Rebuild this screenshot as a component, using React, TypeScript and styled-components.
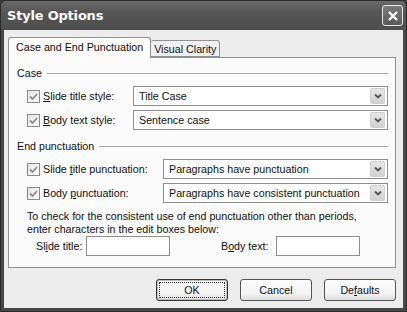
import React from 'react';
import styled, { createGlobalStyle } from 'styled-components';

const GlobalStyle = createGlobalStyle`
  html, body { margin: 0; padding: 0; background: #3a3a3a; }
  body { font-family: "Liberation Sans", Arial, sans-serif; font-size: 10.7px; color: #111; }
`;

const Window = styled.div`
  width: 407px; height: 312px; box-sizing: border-box;
  display: flex; flex-direction: column;
  background: #474747;
  border: 1px solid #2c2c2c;
  border-radius: 6px 6px 0 0;
  overflow: hidden;
`;

const TitleBar = styled.div`
  height: 29px; flex-shrink: 0;
  display: flex; align-items: center; justify-content: space-between;
  padding: 0 3px 0 6px;
  background: linear-gradient(#6a6a6a, #555 40%, #4e4e4e);
`;

const TitleText = styled.span`
  color: #fff; font-weight: bold; font-size: 13px;
  font-family: "DejaVu Sans", "Liberation Sans", sans-serif;
  letter-spacing: -0.2px;
`;

const CloseBtn = styled.div`
  box-sizing: border-box;
  width: 21px; height: 21px;
  border: 1px solid #e8e8e8; border-radius: 3px;
  background: linear-gradient(#7a7a7a, #5a5a5a);
  display: flex; align-items: center; justify-content: center;
`;

const Frame = styled.div`
  flex: 1;
  margin: 0 3px 3px;
  background: #ececec;
  padding: 7px 4px 0;
  display: flex; flex-direction: column;
`;

const TabStrip = styled.div`
  display: flex; align-items: flex-end; height: 20px;
  position: relative; z-index: 1;
`;

const Tab = styled.div<{ $active?: boolean }>`
  box-sizing: border-box;
  height: ${p => (p.$active ? '21px' : '17px')};
  margin-bottom: ${p => (p.$active ? '-1px' : '0')};
  padding: ${p => (p.$active ? '3px 7px 0' : '2px 3px 0')};
  border: 1px solid #919191;
  border-bottom: ${p => (p.$active ? 'none' : '1px solid #919191')};
  border-left: ${p => (p.$active ? '1px solid #919191' : 'none')};
  border-radius: 3px 3px 0 0;
  background: ${p => (p.$active ? '#fbfbfb' : '#f0f0f0')};
  white-space: nowrap;
`;

const Panel = styled.div`
  box-sizing: border-box;
  width: 388px; height: 211px;
  border: 1px solid #919191;
  background: #fbfbfb;
  padding: 2px 7px 0 8px;
`;

const GroupHead = styled.div<{ $gap?: number }>`
  display: flex; align-items: center; gap: 5px;
  height: 26px;
  margin-top: ${p => p.$gap ?? 0}px;
  &::after { content: ''; flex: 1; border-top: 1px solid #a8a8a8; margin-top: 1px; }
`;

const Rows = styled.div`
  display: flex; flex-direction: column; gap: 4px;
  padding-left: 10px;
`;

const Row = styled.div<{ $labelW: number }>`
  display: grid;
  grid-template-columns: ${p => p.$labelW}px 1fr;
  align-items: center;
  height: 20px;
`;

const CheckLabel = styled.label`
  display: flex; align-items: center; gap: 3px;
  white-space: nowrap;
`;

const Box = styled.span`
  box-sizing: border-box;
  width: 13px; height: 13px;
  border: 1px solid #8a8a8a;
  background: linear-gradient(135deg, #e4e4e4, #fdfdfd);
  display: flex; align-items: center; justify-content: center;
`;

const Select = styled.div`
  box-sizing: border-box; height: 20px;
  border: 1px solid #8e8e8e; background: #fff;
  display: flex; align-items: center; justify-content: space-between;
  padding: 0 2px 0 5px;
`;

const Arrow = styled.span`
  box-sizing: border-box;
  width: 15px; height: 16px;
  border: 1px solid #cfcfcf; border-radius: 2px;
  background: linear-gradient(#e6e6e6, #d2d2d2);
  display: flex; align-items: center; justify-content: center;
`;

const Note = styled.div`
  margin-top: 7px; padding-left: 10px; line-height: 13px;
`;

const EditRow = styled.div`
  display: flex; align-items: center;
  padding-left: 19px; height: 20px;
`;

const EditLabel = styled.span<{ $w: number }>`
  width: ${p => p.$w}px;
`;

const Edit = styled.div`
  box-sizing: border-box;
  width: 84px; height: 20px;
  border: 1px solid #8e8e8e; background: #fff;
`;

const Spacer = styled.div<{ $w: number }>`
  width: ${p => p.$w}px;
`;

const Buttons = styled.div`
  display: flex; justify-content: flex-end; gap: 12px;
  margin-top: 11px; padding-right: 3px;
`;

const Button = styled.div<{ $default?: boolean }>`
  box-sizing: border-box;
  width: 72px; height: 22px;
  border: 1px solid ${p => (p.$default ? '#333' : '#555')};
  border-radius: 3px;
  background: linear-gradient(#fdfdfd, #f2f2f2 70%, #dcdcdc);
  display: flex; align-items: center; justify-content: center;
  position: relative;
  ${p => p.$default && `
    box-shadow: inset 0 0 0 1px #bdbdbd;
    &::before {
      content: ''; position: absolute; inset: 2px;
      border: 1px dotted #333; border-radius: 1px;
    }
  `}
`;

const U = styled.span`
  text-decoration: underline;
`;

function Check() {
  return (
    <Box>
      <svg width="9" height="9" viewBox="0 0 9 9">
        <path d="M1 4.5 L3.5 7 L8 2" fill="none" stroke="#8c8c8c" strokeWidth="1.8" />
      </svg>
    </Box>
  );
}

function Drop({ value }: { value: string }) {
  return (
    <Select>
      <span>{value}</span>
      <Arrow>
        <svg width="8" height="6" viewBox="0 0 8 6">
          <path d="M1 1.5 L4 4.5 L7 1.5" fill="none" stroke="#555" strokeWidth="1.8" />
        </svg>
      </Arrow>
    </Select>
  );
}

export default function App() {
  return (
    <>
      <GlobalStyle />
      <Window>
        <TitleBar>
          <TitleText>Style Options</TitleText>
          <CloseBtn>
            <svg width="12" height="12" viewBox="0 0 12 12">
              <path d="M2 2 L10 10 M10 2 L2 10" stroke="#fff" strokeWidth="2.3" />
            </svg>
          </CloseBtn>
        </TitleBar>
        <Frame>
          <TabStrip>
            <Tab $active>Case and End Punctuation</Tab>
            <Tab>Visual Clarity</Tab>
          </TabStrip>
          <Panel>
            <GroupHead>Case</GroupHead>
            <Rows>
              <Row $labelW={106}>
                <CheckLabel><Check /><span><U>S</U>lide title style:</span></CheckLabel>
                <Drop value="Title Case" />
              </Row>
              <Row $labelW={106}>
                <CheckLabel><Check /><span><U>B</U>ody text style:</span></CheckLabel>
                <Drop value="Sentence case" />
              </Row>
            </Rows>
            <GroupHead $gap={3}>End punctuation</GroupHead>
            <Rows>
              <Row $labelW={136}>
                <CheckLabel><Check /><span>Slide <U>t</U>itle punctuation:</span></CheckLabel>
                <Drop value="Paragraphs have punctuation" />
              </Row>
              <Row $labelW={136}>
                <CheckLabel><Check /><span>Body <U>p</U>unctuation:</span></CheckLabel>
                <Drop value="Paragraphs have consistent punctuation" />
              </Row>
            </Rows>
            <Note>
              To check for the consistent use of end punctuation other than periods,
              <br />
              enter characters in the edit boxes below:
            </Note>
            <EditRow>
              <EditLabel $w={50}>Sl<U>i</U>de title:</EditLabel>
              <Edit />
              <Spacer $w={51} />
              <EditLabel $w={55}>B<U>o</U>dy text:</EditLabel>
              <Edit />
            </EditRow>
          </Panel>
          <Buttons>
            <Button $default>OK</Button>
            <Button>Cancel</Button>
            <Button>De<U>f</U>aults</Button>
          </Buttons>
        </Frame>
      </Window>
    </>
  );
}
